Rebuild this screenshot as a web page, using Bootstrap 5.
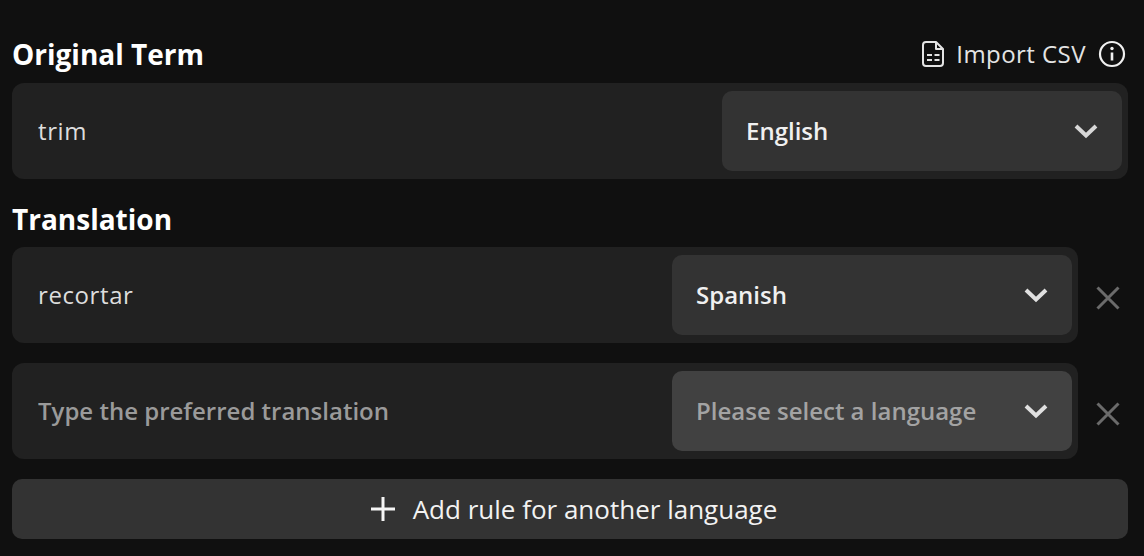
<!DOCTYPE html>
<html lang="en">
<head>
<meta charset="utf-8">
<title>Glossary rule</title>
<link href="https://cdn.jsdelivr.net/npm/bootstrap@5.3.0/dist/css/bootstrap.min.css" rel="stylesheet">
<style>
html,body{height:100%}
body{background:#101010;color:#fff;font-family:"Open Sans","Noto Sans",sans-serif;overflow:hidden}
.page-wrap{padding:32px 16px 0 12px}
.sec-title{font-size:28px;line-height:44px;font-weight:700;margin:0;height:44px}
.sec-title-b{margin-top:18px;height:50px;line-height:44px}
.head-row{height:51px}
.tool-link{font-size:24px;color:#e4e4e4;background:none;border:0;padding:0;line-height:44px;letter-spacing:.45px}
.head-tools{padding-right:2px}
.field-box{height:96px;background:#212121;border-radius:12px;padding:8px 6px 8px 26px}
.term-input{background:transparent!important;border:0;color:#ddd!important;font-size:24px;font-weight:500;padding:0;box-shadow:none!important;border-radius:0;letter-spacing:.6px}
.term-input::placeholder{color:#9a9a9a;opacity:1;font-weight:600;letter-spacing:0}
.lang-pick{width:400px;height:80px;flex:none;background:#333;border:0;border-radius:10px;color:#f0f0f0;font-size:24px;font-weight:600;padding:0 24px}
.lang-pick svg{width:24px;height:16px}
.lang-empty{background:#414141;color:#a3a3a3}
.trans-item{height:96px}
.trans-item+.trans-item{margin-top:20px}
.remove-x{flex:none;width:50px;height:50px;padding:6px 8px 0 0;background:none;border:0}
.add-rule{height:60px;margin-top:20px;background:#333;border:0;border-radius:10px;color:#f2f2f2;font-size:26px;line-height:1;padding-left:20px}
.add-rule:hover{background:#333;color:#f2f2f2}
.add-rule svg{margin-right:18px}
</style>
</head>
<body>
<main class="page-wrap">
  <div class="d-flex justify-content-between align-items-start head-row">
    <h2 class="sec-title">Original Term</h2>
    <div class="d-flex align-items-center gap-2 head-tools">
      <button type="button" class="tool-link d-flex align-items-center">
        <svg width="22" height="26" viewBox="0 0 22 26" fill="none" stroke="#e4e4e4" stroke-width="2" class="me-2" stroke-linejoin="round">
          <path d="M4 1h10l7 7v14a3 3 0 0 1-3 3H4a3 3 0 0 1-3-3V4a3 3 0 0 1 3-3z"/><path d="M14 1v7h7"/>
          <path d="M5 14h5M12.500 14h5M5 19h5M12.500 19h5" stroke-width="2.200"/>
        </svg><span class="ms-1">Import CSV</span></button>
      <svg width="28" height="28" viewBox="0 0 28 28" fill="none" stroke="#f0f0f0" stroke-width="2.200" class="ms-1">
        <circle cx="14" cy="14" r="12"/><path d="M14 12.500v8" stroke-width="2.600"/><circle cx="14" cy="8.500" r="1.700" fill="#f0f0f0" stroke="none"/>
      </svg>
    </div>
  </div>
  <div class="field-box d-flex align-items-center">
    <input class="form-control term-input flex-grow-1" type="text" value="trim" aria-label="Original term">
    <button type="button" class="lang-pick d-flex align-items-center justify-content-between">English
      <svg viewBox="0 0 24 16" fill="none" stroke="#d8d8d8" stroke-width="4"><path d="M2 3l10 9.500L22 3"/></svg>
    </button>
  </div>
  <h2 class="sec-title sec-title-b">Translation</h2>
  <div class="d-flex trans-item align-items-center">
    <div class="field-box d-flex align-items-center flex-grow-1">
      <input class="form-control term-input flex-grow-1" type="text" value="recortar" aria-label="Translation">
      <button type="button" class="lang-pick d-flex align-items-center justify-content-between">Spanish
        <svg viewBox="0 0 24 16" fill="none" stroke="#e0e0e0" stroke-width="4"><path d="M2 3l10 9.500L22 3"/></svg>
      </button>
    </div>
    <button type="button" class="remove-x d-flex align-items-center justify-content-end" aria-label="Remove">
      <svg width="24" height="24" viewBox="0 0 24 24" fill="none" stroke="#6b6b6b" stroke-width="3"><path d="M1.500 1.500l21 21M22.500 1.500l-21 21"/></svg>
    </button>
  </div>
  <div class="d-flex trans-item align-items-center">
    <div class="field-box d-flex align-items-center flex-grow-1">
      <input class="form-control term-input flex-grow-1" type="text" placeholder="Type the preferred translation" aria-label="Translation">
      <button type="button" class="lang-pick lang-empty d-flex align-items-center justify-content-between">Please select a language
        <svg viewBox="0 0 24 16" fill="none" stroke="#e0e0e0" stroke-width="4"><path d="M2 3l10 9.500L22 3"/></svg>
      </button>
    </div>
    <button type="button" class="remove-x d-flex align-items-center justify-content-end" aria-label="Remove">
      <svg width="24" height="24" viewBox="0 0 24 24" fill="none" stroke="#6b6b6b" stroke-width="3"><path d="M1.500 1.500l21 21M22.500 1.500l-21 21"/></svg>
    </button>
  </div>
  <button type="button" class="btn add-rule w-100 d-flex align-items-center justify-content-center">
    <svg width="24" height="24" viewBox="0 0 24 24" fill="none" stroke="#f5f5f5" stroke-width="3"><path d="M12 0v24M0 12h24"/></svg>Add rule for another language
  </button>
</main>
<script src="https://cdn.jsdelivr.net/npm/bootstrap@5.3.0/dist/js/bootstrap.bundle.min.js"></script>
</body>
</html>
